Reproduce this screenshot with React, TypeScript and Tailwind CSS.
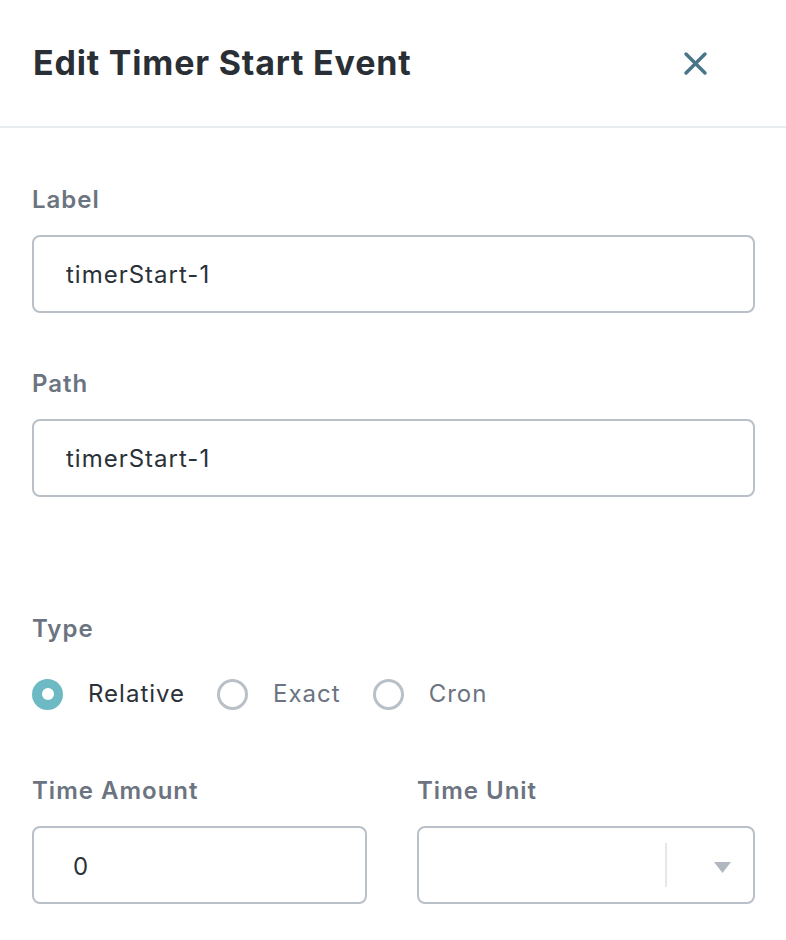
import { useState } from "react";

type TimerType = "relative" | "exact" | "cron";

const typeOptions: { value: TimerType; label: string }[] = [
  { value: "relative", label: "Relative" },
  { value: "exact", label: "Exact" },
  { value: "cron", label: "Cron" },
];

function FieldLabel({ children, className = "" }: { children: string; className?: string }) {
  return (
    <p
      className={`text-[24px] leading-[32px] font-semibold tracking-[1px] text-[#6b7480] ${className}`}
    >
      {children}
    </p>
  );
}

function TextField({ value, className = "" }: { value: string; className?: string }) {
  return (
    <input
      type="text"
      defaultValue={value}
      className={`block h-[78px] w-full rounded-[8px] border-2 border-[#b9c0c8] bg-white text-[24px] tracking-[1px] text-[#2b3138] outline-none ${className}`}
    />
  );
}

export default function App() {
  const [timerType, setTimerType] = useState<TimerType>("relative");

  return (
    <div className="min-h-[940px] w-[786px] bg-white font-['Inter','Noto_Sans',sans-serif]">
      <div className="flex h-[128px] items-center justify-between border-b-2 border-[#e8ecef] pl-[33px] pr-[78px]">
        <h1 className="text-[34px] font-bold leading-[40px] tracking-[0.8px] text-[#2a2f36]">
          Edit Timer Start Event
        </h1>
        <button type="button" className="flex h-[25px] w-[25px] items-center justify-center">
          <svg width="25" height="25" viewBox="0 0 25 25" fill="none">
            <path
              d="M3 3 L22 22 M22 3 L3 22"
              stroke="#4a7689"
              strokeWidth="3.5"
              strokeLinecap="round"
            />
          </svg>
        </button>
      </div>

      <div className="pl-[32px] pr-[31px]">
        <FieldLabel className="mt-[56px]">Label</FieldLabel>
        <TextField value="timerStart-1" className="mt-[19px] pl-[32px]" />

        <FieldLabel className="mt-[55px]">Path</FieldLabel>
        <TextField value="timerStart-1" className="mt-[19px] pl-[32px]" />

        <FieldLabel className="mt-[116px]">Type</FieldLabel>
        <div className="mt-[33px] flex h-[32px] items-center">
          {typeOptions.map((option, index) => {
            const selected = option.value === timerType;
            return (
              <button
                key={option.value}
                type="button"
                onClick={() => setTimerType(option.value)}
                className={`flex items-center ${index === 0 ? "" : "ml-[32px]"}`}
              >
                {selected ? (
                  <span className="flex h-[31px] w-[31px] items-center justify-center rounded-full bg-[#6dbac4]">
                    <span className="h-[12px] w-[12px] rounded-full bg-white" />
                  </span>
                ) : (
                  <span className="h-[31px] w-[31px] rounded-full border-[3px] border-[#b9c0c8] bg-white" />
                )}
                <span
                  className={`ml-[25px] text-[24px] leading-[32px] tracking-[1px] ${
                    selected ? "text-[#2b3138]" : "text-[#6b7480]"
                  }`}
                >
                  {option.label}
                </span>
              </button>
            );
          })}
        </div>

        <div className="mt-[65px] grid grid-cols-[335px_1fr] gap-x-[50px]">
          <div>
            <FieldLabel>Time Amount</FieldLabel>
            <TextField value="0" className="mt-[19px] pl-[39px] pt-[3px]" />
          </div>
          <div>
            <FieldLabel>Time Unit</FieldLabel>
            <div className="mt-[19px] flex h-[78px] w-full items-center rounded-[8px] border-2 border-[#b9c0c8] bg-white">
              <div className="flex-1" />
              <div className="h-[44px] w-[2px] bg-[#e4e8ec]" />
              <div className="flex w-[86px] items-center justify-end pr-[22px] pt-[4px]">
                <svg width="17" height="11" viewBox="0 0 17 11">
                  <path d="M0 0 H17 L8.5 11 Z" fill="#b0b7bf" />
                </svg>
              </div>
            </div>
          </div>
        </div>
      </div>
    </div>
  );
}
